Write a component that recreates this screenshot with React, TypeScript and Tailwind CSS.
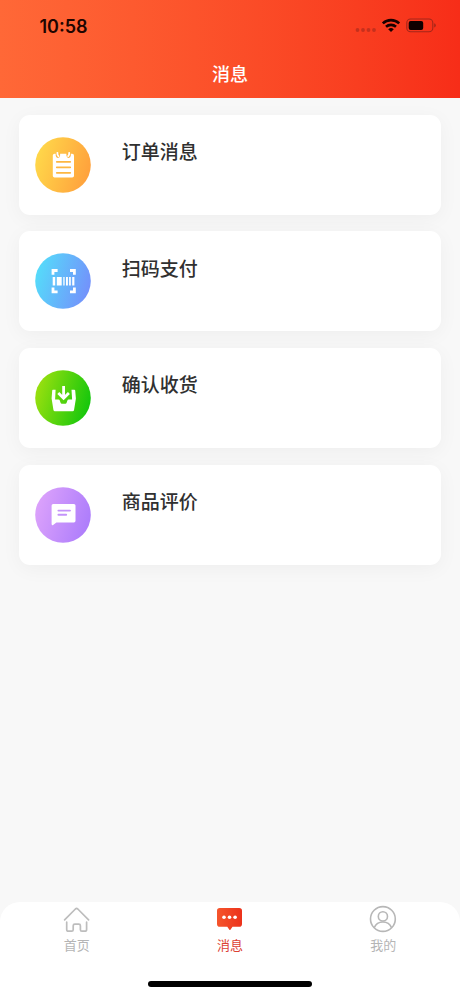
import type { ReactNode } from "react";

type Message = {
  id: string;
  title: string;
  from: string;
  to: string;
  glyph: ReactNode;
};

const messages: Message[] = [
  {
    id: "order",
    title: "订单消息",
    from: "#ffd84a",
    to: "#ffa03c",
    glyph: (
      <>
        <rect x="17.8" y="16.8" width="21.2" height="23.8" rx="1.8" fill="#fff" />
        <path d="M20.7 16v2.6q.2 2.4 2.2 2.4t2.2-2.4V16zM31.4 16v2.6q.2 2.4 2.2 2.4t2.2-2.4V16z" fill="#fdb741" />
        <path d="M21.8 24.8h13.4M21.8 30.3h13.4M21.8 35.8h13.4" stroke="#fdb741" strokeWidth="1.8" strokeLinecap="round" />
        <path d="M22.4 15.9q-.2 2.6 1 3.2M34.2 15.9q.2 2.6-1 3.2" fill="none" stroke="#fff" strokeWidth="1.9" strokeLinecap="round" />
      </>
    ),
  },
  {
    id: "scan",
    title: "扫码支付",
    from: "#55dcfa",
    to: "#7490fb",
    glyph: (
      <>
        <path
          d="M18 21.8v-4.3h4.6M35 17.5h4.4v4.3M39.4 34.5v4.3H35M22.6 38.8H18v-4.3"
          fill="none"
          stroke="#fff"
          strokeWidth="2.8"
        />
        <path
          d="M17.7 24h2.5v8.6h-2.5zM21.8 24h4.9v8.6h-4.9zM28.3 24h1.3v8.6h-1.3zM31 24h1.9v8.6H31zM34.1 24h1.7v8.6h-1.7zM37.2 24h2.2v8.6h-2.2z"
          fill="#fff"
        />
      </>
    ),
  },
  {
    id: "receive",
    title: "确认收货",
    from: "#9be00f",
    to: "#12c60c",
    glyph: (
      <>
        <path
          d="M17.9 19.8h2.7l-.5 9.8h3.4q1 0 1.3.9l.8 2.3q.3.9 1.2.9h3.6q.9 0 1.2-.9l.8-2.3q.3-.9 1.3-.9h3.4l-.6-9.8h2.8q.8 0 .9.8l.7 8-1.8 11.2q-.2 1.5-1.6 1.5H20q-1.4 0-1.6-1.5l-1.8-11.2.6-8q.1-.8.7-.8z"
          fill="#fff"
        />
        <path d="M28.6 16v11.6M23.3 23l5.3 5.2 5.3-5.2" fill="none" stroke="#fff" strokeWidth="2.8" />
      </>
    ),
  },
  {
    id: "review",
    title: "商品评价",
    from: "#dca2fb",
    to: "#ac7cfb",
    glyph: (
      <>
        <path
          d="M18.2 17h20.7q1.6 0 1.6 1.6v15.2q0 1.6-1.6 1.6H21.4l-3.3 2.5q-1.5.8-1.5-.9V18.6q0-1.6 1.6-1.6z"
          fill="#fff"
        />
        <path d="M23.4 23.6h11.6M23.4 27.8h7.8" stroke="#c493fa" strokeWidth="1.9" strokeLinecap="round" />
      </>
    ),
  },
];

function StatusBar() {
  return (
    <div className="flex h-[51px] items-center justify-between pl-[39.5px] pr-6">
      <span className="mt-0.5 font-[Inter] text-[18px] leading-none font-semibold text-[#200500]">10:58</span>
      <svg width="81" height="18" viewBox="355 17 81 18">
        <g fill="#c5301d">
          <circle cx="357.5" cy="30" r="1.9" />
          <circle cx="363" cy="30" r="1.9" />
          <circle cx="368.5" cy="30" r="1.9" />
          <circle cx="374" cy="30" r="1.9" />
        </g>
        <g fill="none" stroke="#180000" strokeWidth="2.6">
          <path d="M382.8 23.4a12 12 0 0 1 16.4 0" />
          <path d="M386 26.8a7.4 7.4 0 0 1 10 0" />
        </g>
        <path d="M388.2 29.2a4.2 4.2 0 0 1 5.6 0L391 32z" fill="#180000" />
        <rect x="406.8" y="19" width="26" height="12.8" rx="3.8" fill="none" stroke="#a3271a" strokeWidth="1.1" />
        <rect x="408.7" y="21" width="14.5" height="8.9" rx="2" fill="#100000" />
        <path d="M434.2 23.3q1.6.6 1.6 2.1t-1.6 2.1z" fill="#a3271a" />
      </svg>
    </div>
  );
}

function MessageCard({ item }: { item: Message }) {
  return (
    <li className="flex h-[100px] rounded-[11px] bg-white pl-[16.3px] shadow-[0_4px_20px_rgba(0,0,0,0.045)]">
      <svg className="mt-[22px] shrink-0" width="56" height="56" viewBox="0 0 56 56">
        <defs>
          <linearGradient id={item.id} x1="0" x2="1" y1="0.35" y2="0.65">
            <stop stopColor={item.from} />
            <stop offset="1" stopColor={item.to} />
          </linearGradient>
        </defs>
        <circle cx="28" cy="28" r="27.8" fill={`url(#${item.id})`} />
        {item.glyph}
      </svg>
      <h2 className="mt-[22.3px] ml-[30.5px] text-[19px] leading-7 font-medium text-[#303030]">{item.title}</h2>
    </li>
  );
}

function HomeIcon() {
  return (
    <svg width="28" height="28" viewBox="0 0 28 28" fill="none" stroke="#bdbdbd" strokeWidth="1.7" strokeLinecap="round" strokeLinejoin="round">
      <path d="M1.6 14.8 12.4 4q1.2-1.1 2.4 0L25.6 14.8" />
      <path d="M3.7 17.2v7.2q0 1.8 1.8 1.8h3.2q1.5 0 1.5-1.5v-4q0-1.6 1.6-1.6h4q1.6 0 1.6 1.6v4q0 1.5 1.5 1.5h2.9q1.8 0 1.8-1.8v-7.2" />
    </svg>
  );
}

function ChatIcon() {
  return (
    <svg width="28" height="28" viewBox="0 0 28 28">
      <defs>
        <linearGradient id="chat">
          <stop stopColor="#f5552c" />
          <stop offset="1" stopColor="#ec321b" />
        </linearGradient>
      </defs>
      <path
        d="M3.8 3h19.4q2.8 0 2.8 2.8v13.1q0 2.8-2.8 2.8h-6.7L14.6 24.4q-.7 1-1.4 0l-1.9-2.7H3.8q-2.8 0-2.8-2.8V5.8Q1 3 3.8 3z"
        fill="url(#chat)"
      />
      <g fill="#fff">
        <circle cx="8" cy="12.3" r="1.8" />
        <circle cx="13.5" cy="12.3" r="1.8" />
        <circle cx="19.1" cy="12.3" r="1.8" />
      </g>
    </svg>
  );
}

function UserIcon() {
  return (
    <svg width="28" height="28" viewBox="0 0 28 28" fill="none" stroke="#b7b7b7" strokeWidth="1.6">
      <circle cx="13.9" cy="14" r="12.4" />
      <circle cx="13.9" cy="11.4" r="4.6" />
      <path d="M5.2 22.8a9.4 9.4 0 0 1 17.4 0" />
    </svg>
  );
}

const tabs = [
  { label: "首页", icon: <HomeIcon />, active: false },
  { label: "消息", icon: <ChatIcon />, active: true },
  { label: "我的", icon: <UserIcon />, active: false },
];

export default function App() {
  return (
    <div className="flex h-[996px] w-[460px] flex-col bg-[#f8f8f8] font-['Noto_Sans_CJK_SC',sans-serif]">
      <header className="h-[98px] bg-linear-to-r from-[#ff6837] to-[#f72d18]">
        <StatusBar />
        <h1 className="text-center text-[18px] leading-[44px] font-medium text-white">消息</h1>
      </header>

      <main className="flex-1 px-[19px] pt-[16.6px]">
        <ul className="flex flex-col gap-[16.7px]">
          {messages.map((item) => (
            <MessageCard key={item.id} item={item} />
          ))}
        </ul>
      </main>

      <nav className="flex h-[94px] flex-col rounded-t-[20px] bg-white">
        <div className="grid grid-cols-3 pt-[3px]">
          {tabs.map((tab) => (
            <div key={tab.label} className="flex flex-col items-center">
              {tab.icon}
              <span className={tab.active ? "mt-[2px] text-[13px] leading-5 text-[#dc4134]" : "mt-[2px] text-[13px] leading-5 text-[#b5b5b5]"}>
                {tab.label}
              </span>
            </div>
          ))}
        </div>
        <div className="mx-auto mt-auto mb-[9px] h-[6px] w-[164px] rounded-full bg-black" />
      </nav>
    </div>
  );
}
